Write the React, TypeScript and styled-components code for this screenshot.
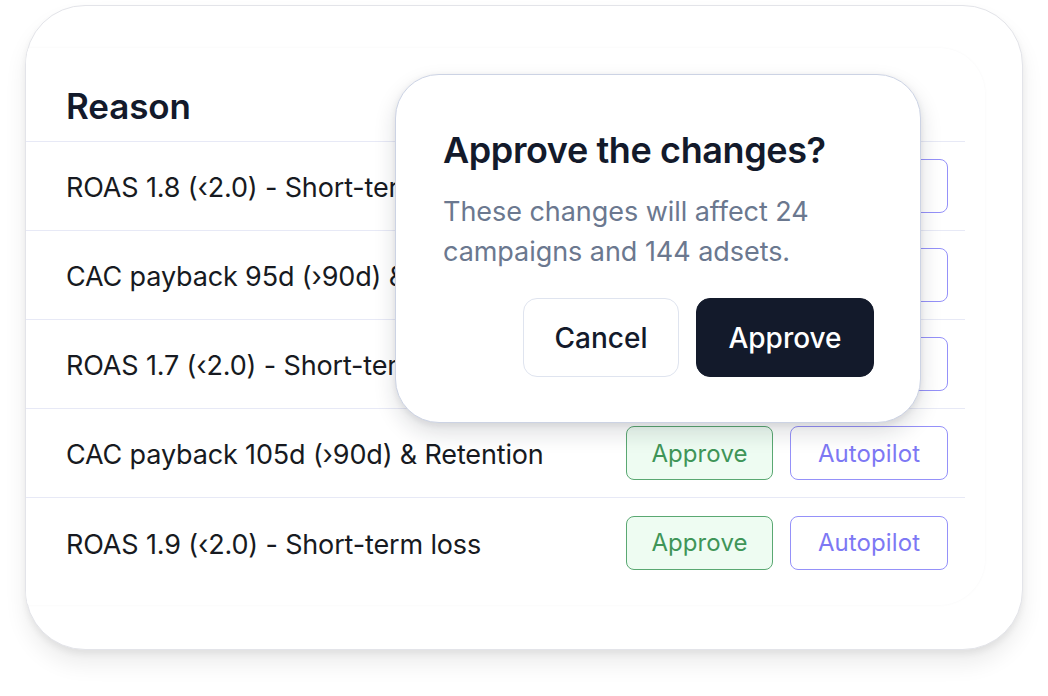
import React from 'react';
import styled, { createGlobalStyle } from 'styled-components';

const GlobalStyle = createGlobalStyle`
  html, body {
    margin: 0;
    padding: 0;
    background: #ffffff;
  }
  body {
    font-family: Inter, "Noto Sans", "Liberation Sans", sans-serif;
    -webkit-font-smoothing: antialiased;
  }
  * {
    box-sizing: border-box;
  }
`;

const Stage = styled.div`
  width: 1048px;
  height: 696px;
  padding: 5px 25px 0;
  overflow: hidden;
`;

const Card = styled.div`
  position: relative;
  width: 998px;
  height: 645px;
  border: 1px solid #e3e4e9;
  border-radius: 60px;
  background: #ffffff;
  padding: 42px 37px 44px 0;
  box-shadow: 0 14px 22px rgba(0, 0, 0, 0.075), 0 4px 6px rgba(0, 0, 0, 0.06);
  overflow: hidden;
`;

// faint inner scroll panel, its left side runs out under the card edge
const Panel = styled.div`
  margin-left: -40px;
  height: 100%;
  border-radius: 46px;
  background: #ffffff;
  padding: 0 20px 0 40px;
  box-shadow: 0 0 3px rgba(20, 30, 60, 0.035);
`;

const HeaderRow = styled.div`
  height: 94px;
  display: flex;
  align-items: flex-end;
  padding: 0 0 17px 40px;
  border-bottom: 1.5px solid #e7e9f6;
`;

const HeaderCell = styled.div`
  font-size: 35px;
  font-weight: 600;
  letter-spacing: -0.1px;
  color: #131a2b;
  line-height: 1;
`;

const Row = styled.div<{ $last?: boolean }>`
  height: 89px;
  display: flex;
  align-items: center;
  padding: 3px 17px 0 40px;
  border-bottom: ${(p) => (p.$last ? 'none' : '1.5px solid #e7e9f6')};
`;

const Reason = styled.div`
  flex: 1;
  font-size: 27px;
  font-weight: 400;
  letter-spacing: -0.15px;
  color: #171a21;
  white-space: nowrap;
`;

const Actions = styled.div`
  display: flex;
  gap: 17px;
  margin-top: -3px;
`;

const RowButton = styled.button<{ $kind: 'approve' | 'autopilot' }>`
  height: 54px;
  width: ${(p) => (p.$kind === 'approve' ? '147px' : '158px')};
  border-radius: 8px;
  font-family: inherit;
  font-size: 24px;
  font-weight: 400;
  letter-spacing: 0.1px;
  border: 1.5px solid ${(p) => (p.$kind === 'approve' ? '#5aa872' : '#9591f9')};
  background: ${(p) => (p.$kind === 'approve' ? '#eefcf2' : '#ffffff')};
  color: ${(p) => (p.$kind === 'approve' ? '#3f9558' : '#7d78f4')};
  padding: 0;
  cursor: pointer;
`;

const Dialog = styled.div`
  position: absolute;
  left: 369px;
  top: 68px;
  width: 526px;
  height: 349px;
  border-radius: 44px;
  border: 1.5px solid #ccd3e4;
  background: #ffffff;
  padding: 54px 46px 45px 47px;
  display: flex;
  flex-direction: column;
  box-shadow: 0 10px 22px rgba(20, 25, 40, 0.14), 0 2px 6px rgba(20, 25, 40, 0.08);
`;

const DialogTitle = styled.h2`
  margin: 0;
  font-size: 36px;
  font-weight: 600;
  letter-spacing: -0.4px;
  line-height: 1.2;
  color: #131a2b;
`;

const DialogBody = styled.p`
  margin: 20px 0 0;
  font-size: 27px;
  font-weight: 400;
  letter-spacing: -0.05px;
  line-height: 40px;
  color: #6b788f;
`;

const DialogActions = styled.div`
  margin-top: auto;
  display: flex;
  justify-content: flex-end;
  gap: 17px;
`;

const DialogButton = styled.button<{ $primary?: boolean }>`
  height: 79px;
  width: ${(p) => (p.$primary ? '178px' : '156px')};
  border-radius: 14px;
  font-family: inherit;
  font-size: 28px;
  font-weight: 500;
  letter-spacing: 0;
  padding: 0;
  border: 1.5px solid ${(p) => (p.$primary ? '#131a2b' : '#dfe4ef')};
  background: ${(p) => (p.$primary ? '#131a2b' : '#ffffff')};
  color: ${(p) => (p.$primary ? '#ffffff' : '#131a2b')};
  cursor: pointer;
`;

const reasons = [
  'ROAS 1.8 (‹2.0) - Short-term loss',
  'CAC payback 95d (›90d) & Retention',
  'ROAS 1.7 (‹2.0) - Short-term loss',
  'CAC payback 105d (›90d) & Retention',
  'ROAS 1.9 (‹2.0) - Short-term loss',
];

const App = () => {
  return (
    <>
      <GlobalStyle />
      <Stage>
        <Card>
          <Panel>
            <HeaderRow>
              <HeaderCell>Reason</HeaderCell>
            </HeaderRow>
            {reasons.map((r, i) => (
              <Row key={i} $last={i === reasons.length - 1}>
                <Reason>{r}</Reason>
                <Actions>
                  <RowButton $kind="approve">Approve</RowButton>
                  <RowButton $kind="autopilot">Autopilot</RowButton>
                </Actions>
              </Row>
            ))}
          </Panel>
          <Dialog>
            <DialogTitle>Approve the changes?</DialogTitle>
            <DialogBody>
              These changes will affect 24 campaigns and 144 adsets.
            </DialogBody>
            <DialogActions>
              <DialogButton>Cancel</DialogButton>
              <DialogButton $primary>Approve</DialogButton>
            </DialogActions>
          </Dialog>
        </Card>
      </Stage>
    </>
  );
};

export default App;
